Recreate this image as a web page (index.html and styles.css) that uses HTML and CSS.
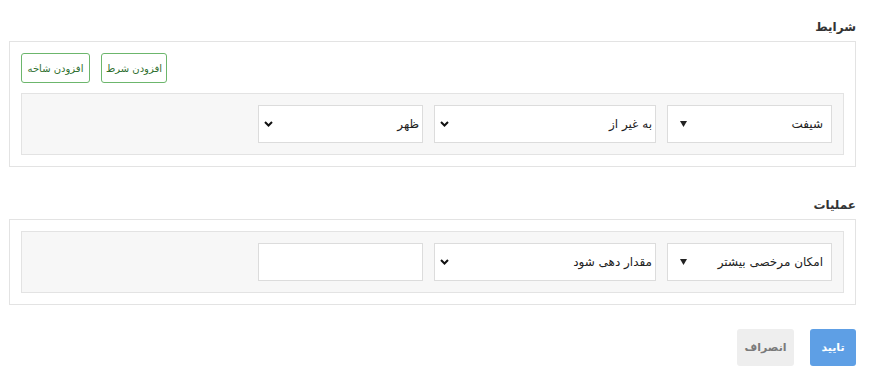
FILE: index.html
```html
<!DOCTYPE html>
<html lang="fa" dir="rtl">
<head>
<meta charset="utf-8">
<link rel="stylesheet" href="styles.css">
</head>
<body>
<div class="page">
  <section class="section">
    <h3 class="title">شرایط</h3>
    <div class="panel">
      <div class="actions">
        <button class="btn-outline btn-cond">افزودن شرط</button>
        <button class="btn-outline btn-branch">افزودن شاخه</button>
      </div>
      <div class="row">
        <div class="field field-sm field-custom"><span>شیفت</span><svg class="tri" width="7" height="6" viewBox="0 0 7 6"><path d="M0 0H7L3.5 6Z" fill="#222"/></svg></div>
        <div class="field field-lg"><span>به غیر از</span><svg class="chev" width="9" height="6" viewBox="0 0 9 6"><path d="M1 1L4.5 4.5L8 1" fill="none" stroke="#111" stroke-width="2"/></svg></div>
        <div class="field field-sm"><span>ظهر</span><svg class="chev" width="9" height="6" viewBox="0 0 9 6"><path d="M1 1L4.5 4.5L8 1" fill="none" stroke="#111" stroke-width="2"/></svg></div>
      </div>
    </div>
  </section>
  <section class="section">
    <h3 class="title">عملیات</h3>
    <div class="panel">
      <div class="row">
        <div class="field field-sm field-custom"><span>امکان مرخصی بیشتر</span><svg class="tri" width="7" height="6" viewBox="0 0 7 6"><path d="M0 0H7L3.5 6Z" fill="#222"/></svg></div>
        <div class="field field-lg"><span>مقدار دهی شود</span><svg class="chev" width="9" height="6" viewBox="0 0 9 6"><path d="M1 1L4.5 4.5L8 1" fill="none" stroke="#111" stroke-width="2"/></svg></div>
        <div class="field field-sm"></div>
      </div>
    </div>
  </section>
  <div class="footer">
    <button class="btn-primary">تایید</button>
    <button class="btn-muted">انصراف</button>
  </div>
</div>
</body>
</html>
```
FILE: styles.css
```css
* { box-sizing: border-box; }
html, body { margin: 0; padding: 0; background: #fff; }
body {
  font-family: "DejaVu Sans", "Noto Sans", sans-serif;
  font-size: 12px;
  color: #222;
}
.page {
  padding: 17px 15px 0 9px;
}
.section { margin-bottom: 28px; }
.section:last-of-type { margin-bottom: 24px; }
.title {
  margin: 0 0 4px;
  font-size: 12px;
  line-height: 20px;
  font-weight: bold;
  color: #333;
}
.panel {
  border: 1px solid #e3e3e3;
  padding: 11px;
}
.actions {
  display: flex;
  justify-content: flex-end;
  gap: 11px;
  margin-bottom: 10px;
}
.btn-outline {
  font-family: inherit;
  font-size: 10px;
  height: 30px;
  padding: 0;
  background: #fff;
  color: #2f6f2f;
  border: 1px solid #6cb66c;
  border-radius: 3px;
}
.btn-cond { width: 66px; }
.btn-branch { width: 69px; }
.row {
  display: flex;
  gap: 11px;
  background: #f7f7f7;
  border: 1px solid #e3e3e3;
  padding: 11px;
}
.field {
  height: 38px;
  background: #fff;
  border: 1px solid #dcdcdc;
  display: flex;
  align-items: center;
  justify-content: space-between;
  padding: 0 3px 0 5px;
  font-size: 12px;
  color: #222;
}
.field-sm { width: 165px; }
.field-lg { width: 222px; }
.field-custom { padding: 0 8px 0 12px; }
.footer {
  display: flex;
  gap: 16px;
}
.btn-primary, .btn-muted {
  font-family: inherit;
  font-size: 11px;
  font-weight: bold;
  height: 37px;
  border: none;
  border-radius: 3px;
}
.btn-primary {
  width: 46px;
  background: #5e9fe5;
  color: #fff;
}
.btn-muted {
  width: 57px;
  background: #eeeeee;
  color: #7a7a7a;
}
```
